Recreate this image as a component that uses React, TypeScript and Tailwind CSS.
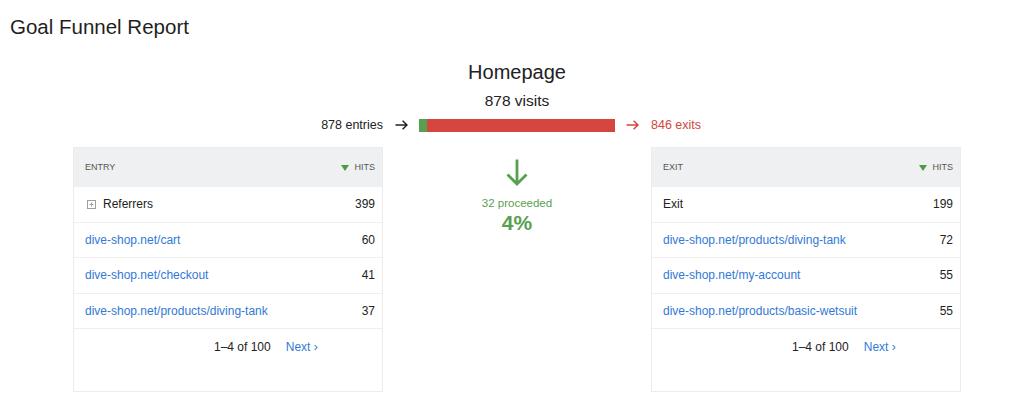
import React from "react";

type Row = { label: string; hits: number; link?: boolean; expandable?: boolean };

const entryRows: Row[] = [
  { label: "Referrers", hits: 399, expandable: true },
  { label: "dive-shop.net/cart", hits: 60, link: true },
  { label: "dive-shop.net/checkout", hits: 41, link: true },
  { label: "dive-shop.net/products/diving-tank", hits: 37, link: true },
];

const exitRows: Row[] = [
  { label: "Exit", hits: 199 },
  { label: "dive-shop.net/products/diving-tank", hits: 72, link: true },
  { label: "dive-shop.net/my-account", hits: 55, link: true },
  { label: "dive-shop.net/products/basic-wetsuit", hits: 55, link: true },
];

function RightArrow({ className }: { className: string }) {
  return (
    <svg viewBox="0 0 13 10" className={className} aria-hidden="true">
      <path
        d="M0.5 5h11.5M7.6 0.7L12 5l-4.4 4.3"
        fill="none"
        stroke="currentColor"
        strokeWidth="1.5"
      />
    </svg>
  );
}

function PlusBox() {
  return (
    <svg viewBox="0 0 9 9" className="h-[9px] w-[9px] text-[#a0a0a0]" aria-hidden="true">
      <rect x="0.5" y="0.5" width="8" height="8" fill="none" stroke="currentColor" strokeWidth="1" />
      <path d="M2.5 4.5h4M4.5 2.5v4" stroke="currentColor" strokeWidth="1" />
    </svg>
  );
}

function FunnelTable({ title, rows }: { title: string; rows: Row[] }) {
  return (
    <div className="h-[245px] border border-[#ececec] bg-white">
      <div className="flex h-[39px] items-center justify-between bg-[#eff0f1] pl-[11px] pr-[7px] text-[9px] text-[#555]">
        <span>{title}</span>
        <span className="flex items-center gap-[5px]">
          <span className="h-0 w-0 border-x-[4px] border-t-[6px] border-x-transparent border-t-[#4f9a46]" />
          HITS
        </span>
      </div>
      {rows.map((row) => (
        <div
          key={row.label}
          className="flex h-[35.5px] items-center justify-between border-b border-[#efefef] pl-[11px] pr-[7px] text-[12px]"
        >
          <span
            className={`flex items-center gap-[7px] ${row.link ? "text-[#3279d6]" : "text-[#222]"}`}
          >
            {row.expandable && (
              <span className="pl-[2px]">
                <PlusBox />
              </span>
            )}
            {row.label}
          </span>
          <span className="text-[#222]">{row.hits}</span>
        </div>
      ))}
      <div className="flex items-center gap-[15px] pl-[140px] pt-[9px] text-[12px]">
        <span className="text-[#222]">1–4 of 100</span>
        <span className="text-[#3279d6]">Next ›</span>
      </div>
    </div>
  );
}

export default function App() {
  return (
    <div
      className="h-[405px] w-[1024px] overflow-hidden bg-white text-[#222]"
      style={{ fontFamily: "'Liberation Sans', Arial, sans-serif" }}
    >
      <h1 className="pl-[10px] pt-[14px] text-[20.5px] leading-[26px] text-[#1f1f1f]">
        Goal Funnel Report
      </h1>

      <div className="ml-[73px] w-[888px] pt-[20px]">
        <div className="text-center text-[20px] leading-[24px] text-[#222]">Homepage</div>
        <div className="mt-[7px] text-center text-[15.5px] leading-[20px] text-[#222]">878 visits</div>

        <div className="mt-[4px] grid h-[20px] grid-cols-[310px_268px_310px] items-center text-[12.5px]">
          <div className="text-right text-[#222]">878 entries</div>
          <div className="flex items-center gap-[11px] px-[12px]">
            <RightArrow className="h-[10px] w-[13px] shrink-0 text-[#222]" />
            <div className="flex h-[13px] flex-1">
              <div className="w-[8px] bg-[#58a04f]" />
              <div className="flex-1 bg-[#d4463e]" />
            </div>
            <RightArrow className="h-[10px] w-[13px] shrink-0 text-[#d4463e]" />
          </div>
          <div className="text-[#d4463e]">846 exits</div>
        </div>

        <div className="mt-[12px] grid grid-cols-[310px_268px_310px]">
          <FunnelTable title="ENTRY" rows={entryRows} />
          <div className="flex flex-col items-center pt-[12px]">
            <svg viewBox="0 0 22 27" className="h-[27px] w-[22px] text-[#58a04f]" aria-hidden="true">
              <path
                d="M11 0.5v24.5M1.5 15.5l9.5 9.5 9.5-9.5"
                fill="none"
                stroke="currentColor"
                strokeWidth="2.8"
              />
            </svg>
            <div className="mt-[9px] text-[11.5px] leading-[16px] text-[#58a04f]">32 proceeded</div>
            <div className="text-[21px] font-bold leading-[24px] text-[#58a04f]">4%</div>
          </div>
          <FunnelTable title="EXIT" rows={exitRows} />
        </div>
      </div>
    </div>
  );
}
